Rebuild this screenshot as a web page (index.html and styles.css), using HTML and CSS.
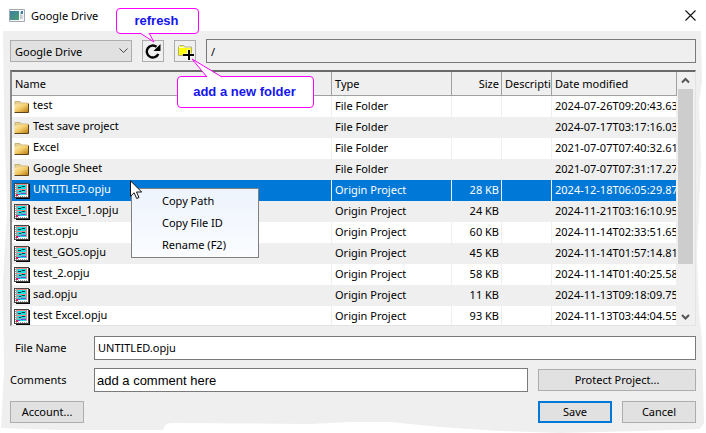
FILE: index.html
```
<!DOCTYPE html>
<html lang="en">
<head>
    <meta charset="UTF-8">
    <meta name="viewport" content="width=device-width, initial-scale=1.0">
    <title>Google Drive</title>
    <link rel="stylesheet" href="styles.css">
</head>
<body>
    <!-- icons used in the file list -->
    <svg class="sprite" width="0" height="0" aria-hidden="true">
        <defs>
            <linearGradient id="gold" x1="0" y1="0" x2="1" y2="1">
                <stop offset="0" stop-color="#fff0b8"/>
                <stop offset="0.5" stop-color="#f2cb68"/>
                <stop offset="1" stop-color="#bb7a10"/>
            </linearGradient>
        </defs>
        <symbol id="folder" viewBox="0 0 16 16">
            <path d="M1 3.500V2.500h5l1 1.500h6.500v3H1z" fill="#e5cf91" stroke="#b99d54" stroke-width="0.7"/>
            <path d="M.5 5.500h4.500l1.500-1H14.500V13H.5z" fill="url(#gold)"/>
            <path d="M.5 13.500h14V4.500" fill="none" stroke="#5d431a"/>
        </symbol>
        <symbol id="project" viewBox="0 0 16 16">
            <path d="M2 1h14v15H2z" fill="#000"/>
            <path d="M0 0h15v15H0z" fill="#444"/>
            <path d="M1 1h13v13H1z" fill="#fff"/>
            <path d="M1.500 2v12M2 13.500h12" fill="none" stroke="#999" stroke-dasharray="1 1"/>
            <path d="M2 1h11v11H2z" fill="#f08a8a"/>
            <path d="M3 2h9v4H3zM3 7h9v5H3z" fill="#10e4e4"/>
            <path d="M3 9.500h9" stroke="#6fbcc0"/>
            <path d="M4 4.500h3l1-1h3M5 8.500h2l1-1h3" fill="none" stroke="#083c3c"/>
            <path d="M3 11.500h3l1-1h5" fill="none" stroke="#6a4be0"/>
            <path d="M2 11h2v2H2z" fill="#d51f4a"/>
        </symbol>
    </svg>

    <div class="dialog">
        <svg class="panel" viewBox="0 0 706 402" preserveAspectRatio="none" aria-hidden="true">
            <path d="M3 0H701L702 50 699 70 701 130 697 225 699 280 702 310 704 392 700 398 640 400 560 402 500 400 440 396 390 391 350 391 310 393 170 392 165 394 163 399 60 399 1 397 4 340 3 250 7 180 4 80z"/>
        </svg>

        <div class="titlebar">
            <svg class="app-icon" viewBox="0 0 16 14" width="16" height="14" aria-hidden="true">
                <defs>
                    <linearGradient id="app" x1="0" y1="0" x2="1" y2="1">
                        <stop offset="0" stop-color="#3b7fa5"/>
                        <stop offset="1" stop-color="#4c9b6c"/>
                    </linearGradient>
                </defs>
                <path d="M.5.5h15v12H.5z" fill="#f5f7f9" stroke="#a2a9af"/>
                <path d="M1 2h9v9H1z" fill="url(#app)"/>
                <path d="M11 3h1v7h-1z" fill="#bbc6cc"/>
                <path d="M12 2h2v3h-2z" fill="#3b7fa5"/>
                <path d="M12 6h2v4h-2z" fill="#cbd4da"/>
            </svg>
            <h1>Google Drive</h1>
            <button class="close" type="button" aria-label="Close">
                <svg viewBox="0 0 11 11" width="11" height="11"><path d="M.5.5l10 10M10.500.5l-10 10" stroke="#111" stroke-width="1.100"/></svg>
            </button>
        </div>

        <div class="content">
            <div class="toolbar">
                <div class="drive">
                    <select class="drive-select" aria-label="Drive">
                        <option>Google Drive</option>
                    </select>
                    <svg class="chevron" viewBox="0 0 9 6" width="9" height="6" aria-hidden="true"><path d="M.5.5l4 4 4-4" fill="none" stroke="#444"/></svg>
                </div>
                <div class="tool">
                    <button class="tool-btn" type="button" aria-label="Refresh">
                        <svg viewBox="0 0 20 20" width="20" height="20">
                            <path d="M15.300 13A6 6 0 1 1 13.500 5.800" fill="none" stroke="#000" stroke-width="2.400"/>
                            <path d="M17.500 3v7h-7z" fill="#000"/>
                        </svg>
                    </button>
                    <div class="callout callout-refresh">refresh
                        <svg class="tail" viewBox="0 0 20 12" width="20" height="12" aria-hidden="true"><path d="M1 1L15 10 10 1" fill="#fff" stroke="#f0f"/></svg>
                    </div>
                </div>
                <div class="tool">
                    <button class="tool-btn" type="button" aria-label="Add a new folder">
                        <svg viewBox="0 0 20 20" width="20" height="20">
                            <path d="M3.500 14.500v-9l1-1h4l1 1.500h7v8.500z" fill="#fffbd0" stroke="#b3b078"/>
                            <path d="M4 7h12v7H4zM5 5h3v1H5z" fill="#ff0"/>
                            <path d="M8 14h11M13.500 8.500v10" stroke="#fff" stroke-width="3"/>
                            <path d="M8 14h11M14 9v10" stroke="#000" stroke-width="2"/>
                        </svg>
                    </button>
                    <div class="callout callout-folder">add a new folder
                        <svg class="tail" viewBox="0 0 34 20" width="34" height="20" aria-hidden="true"><path d="M17 19L2 1 32 19" fill="#fff" stroke="#f0f"/></svg>
                    </div>
                </div>
                <input class="path" type="text" value="/" aria-label="Path" readonly>
            </div>

            <div class="list">
                <div class="list-view">
                    <table class="files">
                        <colgroup>
                            <col>
                            <col class="col-type">
                            <col class="col-size">
                            <col class="col-desc">
                            <col class="col-date">
                        </colgroup>
                        <thead>
                            <tr><th>Name</th><th>Type</th><th class="size">Size</th><th>Descripti</th><th>Date modified</th></tr>
                        </thead>
                        <tbody>
                            <tr><td><svg class="icon"><use href="#folder"/></svg>test</td><td>File Folder</td><td class="size"></td><td></td><td>2024-07-26T09:20:43.63</td></tr>
                            <tr><td><svg class="icon"><use href="#folder"/></svg>Test save project</td><td>File Folder</td><td class="size"></td><td></td><td>2024-07-17T03:17:16.03</td></tr>
                            <tr><td><svg class="icon"><use href="#folder"/></svg>Excel</td><td>File Folder</td><td class="size"></td><td></td><td>2021-07-07T07:40:32.61</td></tr>
                            <tr><td><svg class="icon"><use href="#folder"/></svg>Google Sheet</td><td>File Folder</td><td class="size"></td><td></td><td>2021-07-07T07:31:17.27</td></tr>
                            <tr class="selected"><td><svg class="icon"><use href="#project"/></svg>UNTITLED.opju</td><td>Origin Project</td><td class="size">28 KB</td><td></td><td>2024-12-18T06:05:29.87</td></tr>
                            <tr><td><svg class="icon"><use href="#project"/></svg>test Excel_1.opju</td><td>Origin Project</td><td class="size">24 KB</td><td></td><td>2024-11-21T03:16:10.95</td></tr>
                            <tr><td><svg class="icon"><use href="#project"/></svg>test.opju</td><td>Origin Project</td><td class="size">60 KB</td><td></td><td>2024-11-14T02:33:51.65</td></tr>
                            <tr><td><svg class="icon"><use href="#project"/></svg>test_GOS.opju</td><td>Origin Project</td><td class="size">45 KB</td><td></td><td>2024-11-14T01:57:14.81</td></tr>
                            <tr><td><svg class="icon"><use href="#project"/></svg>test_2.opju</td><td>Origin Project</td><td class="size">58 KB</td><td></td><td>2024-11-14T01:40:25.58</td></tr>
                            <tr><td><svg class="icon"><use href="#project"/></svg>sad.opju</td><td>Origin Project</td><td class="size">11 KB</td><td></td><td>2024-11-13T09:18:09.75</td></tr>
                            <tr><td><svg class="icon"><use href="#project"/></svg>test Excel.opju</td><td>Origin Project</td><td class="size">93 KB</td><td></td><td>2024-11-13T03:44:04.55</td></tr>
                        </tbody>
                    </table>
                </div>
                <div class="scrollbar" aria-hidden="true">
                    <svg class="arrow" viewBox="0 0 17 17"><path d="M5 10.500L8.500 7l3.500 3.500" fill="none" stroke="#555" stroke-width="2"/></svg>
                    <div class="track"><div class="thumb"></div></div>
                    <svg class="arrow" viewBox="0 0 17 17"><path d="M5 7l3.500 3.500L12 7" fill="none" stroke="#555" stroke-width="2"/></svg>
                </div>
                <div class="menu" role="menu">
                    <button type="button" role="menuitem">Copy Path</button>
                    <button type="button" role="menuitem">Copy File ID</button>
                    <button type="button" role="menuitem">Rename (F2)</button>
                </div>
                <svg class="cursor" viewBox="0 0 13 20" width="13" height="20" aria-hidden="true"><path d="M.5.8v15.500l3.600-3.500 2.600 5.700 2.300-1-2.500-5.500h5.200z" fill="#fff" stroke="#111"/></svg>
            </div>

            <div class="field">
                <label class="indent" for="file-name">File Name</label>
                <input class="text" type="text" id="file-name" value="UNTITLED.opju">
            </div>
            <div class="field">
                <label for="comments">Comments</label>
                <input class="text comment" type="text" id="comments" value="add a comment here">
                <button class="btn protect" type="button">Protect Project...</button>
            </div>
            <div class="actions">
                <button class="btn account" type="button">Account...</button>
                <button class="btn save" type="button">Save</button>
                <button class="btn" type="button">Cancel</button>
            </div>
        </div>
    </div>
</body>
</html>
```

FILE: styles.css
```
* {
    box-sizing: border-box;
}
body {
    margin: 0;
    font-family: "Noto Sans", "Open Sans", sans-serif;
    font-size: 11px;
    color: #000;
    background-color: #fff;
}
button,
input,
select {
    margin: 0;
    font: inherit;
    color: inherit;
}
.sprite {
    position: absolute;
}
.dialog {
    position: relative;
    display: flex;
    flex-direction: column;
    height: 100vh;
    min-height: 300px;
}

/* grey dialog surface with ragged edges */
.panel {
    position: absolute;
    top: 31px;
    left: 0;
    width: 100%;
    height: calc(100% - 31px);
    fill: #efefef;
}

/* title bar */
.titlebar {
    display: flex;
    align-items: center;
    height: 31px;
    padding: 0 10px 0 9px;
}
.titlebar h1 {
    flex: 1;
    margin: 0 0 0 6px;
    font-size: 11px;
    font-weight: normal;
}
.close {
    display: flex;
    padding: 0;
    border: none;
    background: none;
}

.content {
    position: relative;
    flex: 1;
    display: flex;
    flex-direction: column;
    min-height: 0;
    padding: 8px 10px 10px;
}

/* toolbar */
.toolbar {
    display: flex;
    align-items: center;
    gap: 10px;
    margin-bottom: 7px;
}
.drive {
    position: relative;
    width: 122px;
}
.drive-select {
    display: block;
    appearance: none;
    width: 100%;
    height: 22px;
    padding: 0 4px;
    border: 1px solid #adadad;
    border-radius: 0;
    background-color: #e1e1e1;
}
.chevron {
    position: absolute;
    top: 8px;
    right: 4px;
    pointer-events: none;
}
.tool {
    position: relative;
    z-index: 2;
}
.tool-btn {
    display: flex;
    width: 22px;
    height: 22px;
    padding: 0;
    border: 1px solid #adadad;
    background-color: #efefef;
}
.path {
    flex: 1;
    min-width: 0;
    height: 24px;
    padding: 0 4px;
    border: 1px solid #7a7a7a;
    background-color: #efefef;
}

/* callouts */
.callout {
    position: absolute;
    border: 1px solid #f0f;
    border-radius: 4px;
    background-color: #fff;
    color: #1414f0;
    font: bold 13px "Liberation Sans", Arial, sans-serif;
    text-align: center;
    white-space: nowrap;
}
.callout-refresh {
    top: -32px;
    left: -26px;
    width: 83px;
    padding-right: 2px;
    line-height: 24px;
}
.callout-folder {
    top: 36px;
    left: 3px;
    width: 137px;
    padding-right: 2px;
    line-height: 30px;
}
.tail {
    position: absolute;
}
.callout-refresh .tail {
    top: 23px;
    left: 22px;
}
.callout-folder .tail {
    bottom: 29px;
    left: 12px;
}

/* file list */
.list {
    position: relative;
    flex: 1;
    display: flex;
    min-height: 0;
    margin-bottom: 10px;
    border: 1px solid #e3e3e3;
    border-top: 2px solid #696969;
    border-left: 2px solid #8a8a8a;
    background-color: #fff;
}
.list-view {
    flex: 1;
    min-width: 0;
    overflow: hidden;
}
.files {
    width: 100%;
    table-layout: fixed;
    border-collapse: separate;
    border-spacing: 0;
}
.col-type {
    width: 120px;
}
.col-size,
.col-desc {
    width: 50px;
}
.col-date {
    width: 125px;
}
.files th,
.files td {
    height: 21px;
    padding: 0 0 2px 3px;
    overflow: hidden;
    border-right: 1px solid #efefef;
    font-weight: normal;
    line-height: 18px;
    text-align: left;
    white-space: nowrap;
}
.files th {
    height: 24px;
    padding-bottom: 0;
    border-right-color: #a0a0a0;
    border-bottom: 1px solid #a0a0a0;
    background-color: #efefef;
}
.files .size {
    padding-right: 2px;
    text-align: right;
}
.files tbody tr:nth-child(even) {
    background-color: #efefef;
}
.files tbody .selected {
    background-color: #0078d7;
    color: #fff;
}
.files td:first-child {
    padding-left: 2px;
}
.icon {
    width: 16px;
    height: 16px;
    margin-right: 3px;
    vertical-align: middle;
}

/* scrollbar */
.scrollbar {
    display: flex;
    flex-direction: column;
    width: 18px;
    background-color: #f0f0f0;
}
.arrow {
    width: 17px;
    height: 17px;
}
.track {
    flex: 1;
}
.thumb {
    width: 15px;
    height: 80%;
    margin-left: 1px;
    background-color: #cdcdcd;
}

/* context menu */
.menu {
    position: absolute;
    top: 116px;
    left: 119px;
    width: 128px;
    padding: 1px 0;
    border: 1px solid #808080;
    background: linear-gradient(#eef4fd, #fafcff);
}
.menu button {
    display: block;
    width: 100%;
    height: 22px;
    padding: 0 0 2px 30px;
    border: none;
    background: none;
    text-align: left;
}
.cursor {
    position: absolute;
    top: 108px;
    left: 118px;
}

/* form */
.field {
    display: flex;
    align-items: center;
    margin-bottom: 8px;
}
.field label {
    width: 84px;
    padding-bottom: 1px;
}
.field .indent {
    padding-left: 5px;
}
.text {
    flex: 1;
    min-width: 0;
    height: 24px;
    padding: 0 3px 2px;
    border: 1px solid #7a7a7a;
    background-color: #fff;
}
.comment {
    padding: 0 2px;
    font: 13px "Liberation Sans", Arial, sans-serif;
}
.btn {
    width: 74px;
    height: 22px;
    padding: 0 0 1px;
    border: 1px solid #adadad;
    background-color: #e1e1e1;
}
.protect {
    width: 158px;
    margin-left: 10px;
}
.actions {
    display: flex;
    gap: 10px;
    margin-top: 1px;
}
.account {
    margin-right: auto;
}
.save {
    border: 2px solid #0078d7;
}
```
